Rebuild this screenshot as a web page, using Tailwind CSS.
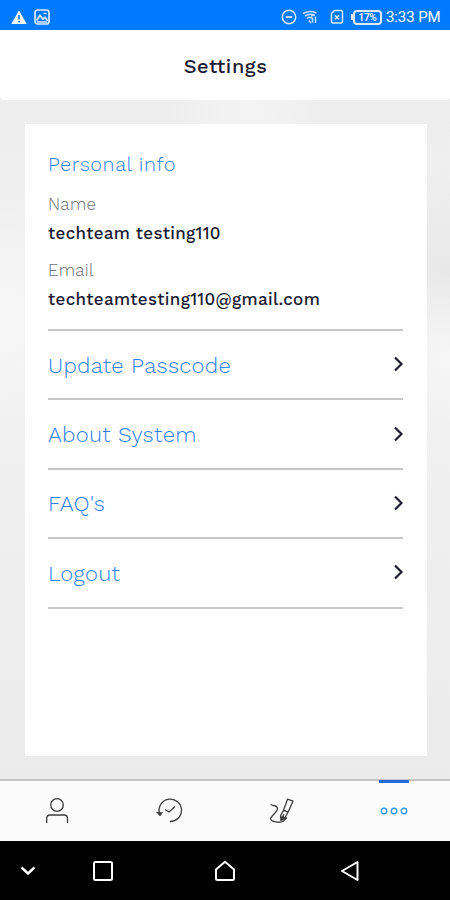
<!DOCTYPE html>
<html lang="en">
<head>
  <meta charset="UTF-8" />
  <meta name="viewport" content="width=device-width, initial-scale=1.0"/>
  <title>Settings</title>
  <script src="https://cdn.jsdelivr.net/npm/@tailwindcss/browser@4"></script>
</head>
<body class="bg-black font-['Work_Sans','Inter',sans-serif] text-[#1c1b33]">
  <div class="w-[450px] h-[900px] flex flex-col overflow-hidden">
    <!-- Status bar -->
    <div class="h-[30px] shrink-0 bg-[#007aff] text-white flex items-center justify-between pl-[11px] pr-[10px] pt-1">
      <div class="flex items-center gap-[7px]">
        <svg class="w-4 h-[15px]" viewBox="0 0 16 15"><path d="M8 0.5 15.7 14H0.3z" fill="#fff"/><path d="M8 5v4.500M8 11v1.600" stroke="#007aff" stroke-width="1.600"/></svg>
        <svg class="w-4 h-4" viewBox="0 0 16 16" fill="none" stroke="#dcebff" stroke-width="1.700"><rect x="1" y="1" width="14" height="14" rx="2.500"/><path d="M2.500 11.500 6 6.500l3 3.500 2-1.500 3 3.500M3 13h10M9.500 4.500h3"/></svg>
      </div>
      <div class="flex items-center">
        <svg class="w-4 h-4" viewBox="0 0 16 16" fill="none" stroke="#dcebff" stroke-width="1.500"><circle cx="8" cy="8" r="6.700"/><path d="M4.800 8h6.400" stroke-width="1.800"/></svg>
        <svg class="w-4 h-4 ml-[5px]" viewBox="0 0 16 16" fill="none" stroke="#c4dfff" stroke-width="1.500"><path d="M1 4.500Q8 1 14.500 4M3 7Q8 4 13 6.500M5 9.500Q7.500 7.500 10 9M7 11.500l2 2.500M10.500 13.500V8.500M13.500 7.500v6.500M9 7l3-1"/></svg>
        <svg class="w-[14px] h-4 ml-[12px]" viewBox="0 0 14 16" fill="none" stroke="#dcebff" stroke-width="1.500"><path d="M4.500 1.500H11q1.500 0 1.500 1.500v9.500Q12.500 14 11 14H3q-1.500 0-1.500-1.500V4.500z"/><path d="m5 6.300 4 4M9 6.300l-4 4"/></svg>
        <div class="flex items-center ml-[7px]">
          <span class="w-[2px] h-1.5 bg-[#dcebff]"></span>
          <span class="w-[29px] h-[15px] border-2 border-[#dcebff] rounded-[4px] font-[Roboto] font-medium text-[10px] leading-[11px] tracking-[-0.3px] text-center">17%</span>
        </div>
        <span class="ml-[4px] w-[54px] whitespace-nowrap font-[Roboto] text-[15px] leading-4 tracking-[-0.1px]">3:33 PM</span>
      </div>
    </div>

    <!-- Header -->
    <div class="bg-[#eeeeee] shrink-0">
      <header class="h-[70px] bg-white rounded-b-[4px] flex items-center justify-center">
        <h1 class="text-[20px] font-medium tracking-[0.55px] pt-[2px] pl-[1px]">Settings</h1>
      </header>
    </div>

    <!-- Content -->
    <main class="h-[679px] shrink-0 pt-[24px] px-[24.5px] bg-[radial-gradient(ellipse_at_0%_32%,#f7f7f7_0%,transparent_20%),radial-gradient(ellipse_at_100%_38%,#f6f6f6_0%,transparent_14%),radial-gradient(ellipse_at_100%_25%,#e8e8e8_0%,transparent_14%),radial-gradient(ellipse_at_55%_0%,#f4f4f4_0%,transparent_22%),linear-gradient(#eeeeee,#f0f0f0_50%,#ebebeb)]">
      <div class="w-[402px] h-[632px] bg-white px-[23.5px] pt-[26px]">
        <section class="h-[179px]">
          <h2 class="text-[20px] leading-[28px] font-light text-[#2f80f5] tracking-[0.58px]">Personal info</h2>
          <p class="mt-[14px] text-[17px] leading-6 font-light text-[#6f6f78] tracking-[0.3px]">Name</p>
          <p class="mt-[5px] text-[17px] leading-6 font-medium tracking-[0.3px]">techteam testing110</p>
          <p class="mt-[13px] text-[17px] leading-6 font-light text-[#6f6f78] tracking-[0.3px]">Email</p>
          <p class="mt-[5px] text-[17px] leading-6 font-medium tracking-[0.32px]">techteamtesting110@gmail.com</p>
        </section>
        <ul class="w-[355px] border-t-2 border-[#c6c6c6] text-[22px] font-light text-[#2f80f5] tracking-[0.32px]">
          <li class="h-[69.400px] border-b-2 border-[#c6c6c6] flex items-center justify-between">
            <span class="pt-px">Update Passcode</span>
            <svg class="w-[10px] h-4 -mt-px" viewBox="0 0 10 16" fill="none" stroke="#1d1d30" stroke-width="2.200"><path d="m2 1.500 6.500 6.500-6.500 6.500"/></svg>
          </li>
          <li class="h-[69.400px] border-b-2 border-[#c6c6c6] flex items-center justify-between">
            <span class="pt-px">About System</span>
            <svg class="w-[10px] h-4 -mt-px" viewBox="0 0 10 16" fill="none" stroke="#1d1d30" stroke-width="2.200"><path d="m2 1.500 6.500 6.500-6.500 6.500"/></svg>
          </li>
          <li class="h-[69.400px] border-b-2 border-[#c6c6c6] flex items-center justify-between">
            <span class="pt-px">FAQ's</span>
            <svg class="w-[10px] h-4 -mt-px" viewBox="0 0 10 16" fill="none" stroke="#1d1d30" stroke-width="2.200"><path d="m2 1.500 6.500 6.500-6.500 6.500"/></svg>
          </li>
          <li class="h-[69.400px] border-b-2 border-[#c6c6c6] flex items-center justify-between">
            <span class="pt-px">Logout</span>
            <svg class="w-[10px] h-4 -mt-px" viewBox="0 0 10 16" fill="none" stroke="#1d1d30" stroke-width="2.200"><path d="m2 1.500 6.500 6.500-6.500 6.500"/></svg>
          </li>
        </ul>
      </div>
    </main>

    <!-- Tab bar -->
    <nav class="h-[62px] shrink-0 grid grid-cols-4 bg-[#fbfbfb] border-t-2 border-[#c4c4c4] text-[#3c3c3c]">
      <a class="flex items-center justify-center pl-[1px]" href="#">
        <svg class="w-7 h-7" viewBox="0 0 28 28" fill="none" stroke="currentColor" stroke-width="1.300"><circle cx="14" cy="8" r="6.300"/><path d="M3.700 26v-4.500Q3.700 18 7 18h14Q24.500 18 24.500 21.500V26"/></svg>
      </a>
      <a class="flex items-center justify-center pl-[1px]" href="#">
        <svg class="w-7 h-7" viewBox="0 0 28 28" fill="none" stroke="currentColor" stroke-width="1.300"><path d="M4.300 15.500A11.200 11.200 0 1 1 14.800 24.500"/><path d="m1.500 15 6 .5-2.500 3.500z" fill="currentColor" stroke-width=".6"/><path d="m10 12.500 4 2.500 6-5.500"/></svg>
      </a>
      <a class="flex items-center justify-center pl-[1px]" href="#">
        <svg class="w-7 h-7" viewBox="0 0 28 28" fill="none" stroke="currentColor" stroke-width="1.300" stroke-linejoin="round"><path d="M2.500 7.500 5 8.500q4 0 4.500 3C9.500 15 4 18 2.500 21.500c0 3.500 9 4.500 12.500 3"/><path d="m19.500 2.200 5.500 2-5 11-4.500-2zM15.500 13.200l-3 5.500.5 5 4-3 3-5.500M13 23.700l3-6.500M12.500 20l6 1-3.500 3.500"/></svg>
      </a>
      <a class="flex flex-col items-center text-[#2b93f0] pl-[1px]" href="#">
        <span class="w-[30px] h-[3px] -mt-px bg-[#2468dc]"></span>
        <svg class="w-7 h-2 mt-[24px]" viewBox="0 0 28 8" fill="none" stroke="currentColor" stroke-width="1.300"><circle cx="4" cy="4" r="2.800"/><circle cx="14" cy="4" r="2.800"/><circle cx="24" cy="4" r="2.800"/></svg>
      </a>
    </nav>

    <!-- Android navigation -->
    <div class="h-[59px] shrink-0 bg-black flex items-center">
      <svg class="w-[18px] h-[22px] ml-[19px]" viewBox="0 0 18 22" fill="none" stroke="#fff" stroke-width="2.400"><path d="m2.500 7.500 6.500 6 6.500-6"/></svg>
      <svg class="w-[22px] h-[22px] ml-[55px]" viewBox="0 0 22 22" fill="none" stroke="#fff" stroke-width="2"><rect x="2" y="2" width="18" height="18" rx="1.500"/></svg>
      <svg class="w-[22px] h-[22px] ml-[100px]" viewBox="0 0 22 22" fill="none" stroke="#fff" stroke-width="2" stroke-linejoin="round"><path d="m11 1.800 9 7.700V18.500q0 1.500-1.500 1.500h-15Q2 20 2 18.500v-9z"/></svg>
      <svg class="w-[20px] h-[22px] ml-[104px]" viewBox="0 0 20 22" fill="none" stroke="#fff" stroke-width="2" stroke-linejoin="round"><path d="M17.500 2v18L2 11z"/></svg>
    </div>
  </div>
</body>
</html>
